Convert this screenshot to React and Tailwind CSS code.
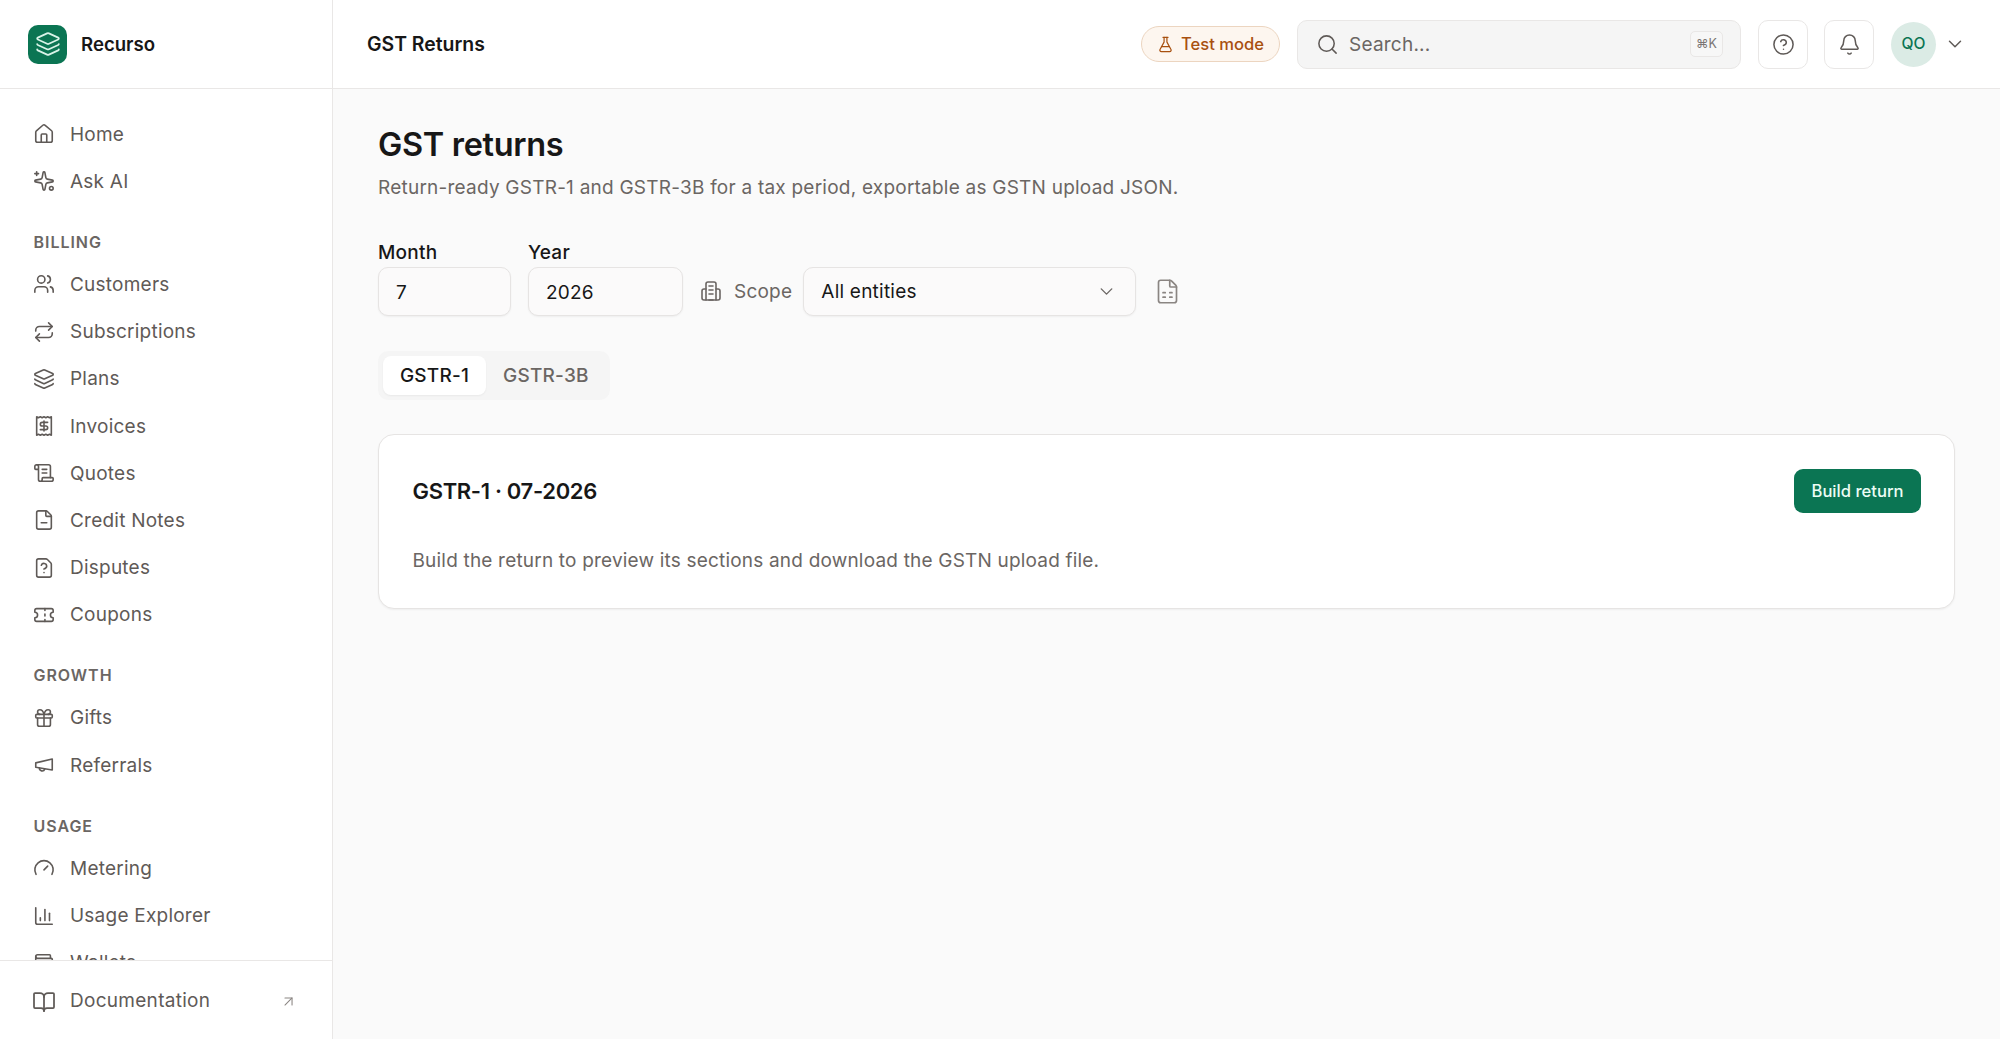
import React from 'react';
import {
  ArrowUpRight, Bell, BookOpen, ChartColumn, ChevronDown, CircleHelp, FileMinus,
  FileQuestion, FileSpreadsheet, FlaskConical, Gauge, Gift, House, Layers, Receipt,
  Repeat, ScrollText, Search, Sparkles, Ticket, Users, Wallet,
} from 'lucide-react';

// lucide's megaphone has the wrong shape here, the reference one is a flat cone
const Cone = ({ size = 24, strokeWidth = 2, className = '' }) => (
  <svg width={size} height={size} viewBox="0 0 24 24" fill="none" stroke="currentColor" strokeWidth={strokeWidth} strokeLinecap="round" strokeLinejoin="round" className={className}>
    <path d="M21 5.5v12L3 14.5v-4.8z" />
    <path d="M7 15.2a3 3 0 0 0 5.8 1.3" />
  </svg>
);

const Tower = ({ size = 24, strokeWidth = 2, className = '' }) => (
  <svg width={size} height={size} viewBox="0 0 24 24" fill="none" stroke="currentColor" strokeWidth={strokeWidth} strokeLinecap="round" strokeLinejoin="round" className={className}>
    <path d="M7 21V5a2 2 0 0 1 2-2h6a2 2 0 0 1 2 2v16" />
    <path d="M10 7h4M10 11h4M10 15h4" />
    <path d="M7 10H5a2 2 0 0 0-2 2v7a2 2 0 0 0 2 2h14a2 2 0 0 0 2-2v-7a2 2 0 0 0-2-2h-2" />
    <path d="M10 21h4" />
  </svg>
);

const navGroups = [
  { items: [['Home', House], ['Ask AI', Sparkles]] },
  {
    label: 'BILLING',
    items: [
      ['Customers', Users], ['Subscriptions', Repeat], ['Plans', Layers], ['Invoices', Receipt],
      ['Quotes', ScrollText], ['Credit Notes', FileMinus], ['Disputes', FileQuestion], ['Coupons', Ticket],
    ],
  },
  { label: 'GROWTH', items: [['Gifts', Gift], ['Referrals', Cone]] },
  { label: 'USAGE', items: [['Metering', Gauge], ['Usage Explorer', ChartColumn], ['Wallets', Wallet]] },
];

const NavItem = ({ label, icon: Icon }) => (
  <div className="flex h-[47.2px] shrink-0 items-center gap-[15px] pl-[33px] text-[#5f5a57]">
    <Icon
      size={22}
      strokeWidth={1.75}
      className={`shrink-0 ${label === 'Ask AI' ? '-scale-x-100' : ''}`}
    />
    <span className="text-[19px] leading-none tracking-[0.012em]">{label}</span>
  </div>
);

const Sidebar = () => (
  <aside className="flex h-[1039px] w-[333px] shrink-0 flex-col border-r border-[#e9e7e6] bg-white">
    <div className="flex h-[89px] shrink-0 items-center gap-[14px] border-b border-[#e9e7e6] pl-[28px]">
      <div className="flex h-[39px] w-[39px] items-center justify-center rounded-[10px] bg-[#0b7553]">
        <Layers size={26} strokeWidth={1.6} className="text-[#d9f3e8]" />
      </div>
      <span className="pt-[1.5px] text-[18.6px] font-semibold text-[#171717]">Recurso</span>
    </div>
    <nav className="flex min-h-0 flex-1 flex-col overflow-hidden pt-[21.5px]">
      {navGroups.map((group, i) => (
        <div key={i} className="flex shrink-0 flex-col">
          {group.label && (
            <div className="mt-[24.5px] mb-[6.5px] flex h-[25px] items-center pl-[33.5px] text-[16px] font-semibold tracking-[0.06em] text-[#6b6663]">
              {group.label}
            </div>
          )}
          {group.items.map(([label, Icon]) => (
            <NavItem key={label} label={label} icon={Icon} />
          ))}
        </div>
      ))}
    </nav>
    <div className="flex h-[79px] shrink-0 items-center border-t border-[#e9e7e6] pt-[3px] pr-[35px] pl-[32px] text-[#5f5a57]">
      <BookOpen size={24} strokeWidth={1.75} className="shrink-0" />
      <span className="ml-[14px] flex-1 text-[19px] tracking-[0.015em]">Documentation</span>
      <ArrowUpRight size={17} strokeWidth={1.5} className="text-[#8a8582]" />
    </div>
  </aside>
);

const Header = () => (
  <header className="flex h-[89px] shrink-0 items-center border-b border-[#e9e7e6] bg-white pr-[34px] pl-[34px]">
    <h2 className="flex-1 pt-[1.5px] text-[19.4px] font-semibold text-[#171717]">GST Returns</h2>
    <div className="flex h-[36px] w-[139px] items-center justify-center gap-[7px] rounded-full border border-[#ecd5c0] bg-[#fdf6ef] text-[16.6px] font-medium text-[#a8500f]">
      <FlaskConical size={17} strokeWidth={1.7} />
      Test mode
    </div>
    <div className="ml-[17px] flex h-[49px] w-[444px] items-center rounded-[10px] border border-[#e9e7e6] bg-[#f5f5f5] pr-[17px] pl-[18px]">
      <Search size={23} strokeWidth={1.6} className="text-[#5f5a57]" />
      <span className="ml-[10px] flex-1 pt-[1.5px] text-[19px] tracking-[0.012em] text-[#6b6663]">Search...</span>
      <kbd className="flex h-[26px] w-[33px] items-center justify-center rounded-[5px] border border-[#e9e7e6] bg-[#f7f7f7] font-[Inter,'DejaVu_Sans',sans-serif] text-[12.5px] text-[#7a7573]">
        ⌘K
      </kbd>
    </div>
    <button className="ml-[17px] flex h-[49px] w-[50px] items-center justify-center rounded-[10px] border border-[#e9e7e6] bg-white text-[#5f5a57]">
      <CircleHelp size={23} strokeWidth={1.6} />
    </button>
    <button className="ml-[16px] flex h-[49px] w-[50px] items-center justify-center rounded-[10px] border border-[#e9e7e6] bg-white text-[#5f5a57]">
      <Bell size={23} strokeWidth={1.6} />
    </button>
    <div className="ml-[17px] flex h-[45px] w-[45px] items-center justify-center rounded-full bg-[#dbebe5] text-[15.6px] font-medium text-[#0b7553]">
      QO
    </div>
    <ChevronDown size={22} strokeWidth={1.6} className="ml-[8px] text-[#5f5a57]" />
  </header>
);

const Field = ({ label, value, width }) => (
  <label className="flex flex-col">
    <span className="mb-[3px] text-[19px] leading-[22px] font-medium tracking-[0.012em] text-[#171717]">{label}</span>
    <input
      readOnly
      value={value}
      className={`h-[49px] ${width} rounded-[10px] border border-[#e6e4e3] bg-[#fbfafa] px-[17px] pt-[3px] text-[19px] tracking-[0.012em] text-[#171717] shadow-xs outline-none`}
    />
  </label>
);

export default function App() {
  return (
    <div className="flex h-[1039px] w-[2000px] overflow-hidden bg-[#fafafa] font-[Inter,sans-serif]">
      <Sidebar />
      <div className="flex min-w-0 flex-1 flex-col">
        <Header />
        <main className="flex flex-col pt-[36px] pr-[45px] pl-[45px]">
          <h1 className="text-[32.5px] leading-[40px] font-semibold tracking-[-0.01em] text-[#171717]">GST returns</h1>
          <p className="mt-[10.5px] text-[19px] leading-[24px] tracking-[0.012em] text-[#6b6663]">
            Return-ready GSTR-1 and GSTR-3B for a tax period, exportable as GSTN upload JSON.
          </p>
          <div className="mt-[42px] flex items-end">
            <Field label="Month" value="7" width="w-[133px]" />
            <div className="ml-[17px]">
              <Field label="Year" value="2026" width="w-[155px]" />
            </div>
            <div className="ml-[16px] flex h-[49px] items-center gap-[11px] text-[#6b6663]">
              <Tower size={24} strokeWidth={1.6} />
              <span className="pt-[1.5px] text-[19px] tracking-[0.012em]">Scope</span>
            </div>
            <div className="ml-[11px] flex h-[49px] w-[333px] items-center justify-between rounded-[10px] border border-[#e6e4e3] bg-[#fbfafa] pr-[18px] pl-[17px] text-[19px] tracking-[0.012em] text-[#171717] shadow-xs">
              <span className="pt-[3px]">All entities</span>
              <ChevronDown size={21} strokeWidth={1.6} className="text-[#6b6663]" />
            </div>
            <div className="ml-[18px] flex h-[49px] items-center text-[#8a8582]">
              <FileSpreadsheet size={27} strokeWidth={1.5} />
            </div>
          </div>
          <div className="mt-[35.5px] flex h-[49px] w-[232px] items-center rounded-[10px] bg-[#f5f5f5] px-[5px]">
            <div className="flex h-[39px] w-[103px] items-center justify-center rounded-[8px] bg-white pt-[1.5px] text-[19px] font-medium tracking-[0.012em] text-[#171717] shadow-xs">
              GSTR-1
            </div>
            <div className="ml-[17px] pt-[1.5px] text-[19px] font-medium tracking-[0.012em] text-[#6b6663]">GSTR-3B</div>
          </div>
          <section className="mt-[34px] flex h-[175px] flex-col rounded-[16px] border border-[#e6e4e3] bg-white pt-[34px] pr-[33px] pl-[33.5px] shadow-xs">
            <div className="flex items-center justify-between">
              <h3 className="text-[22px] font-semibold tracking-[-0.015em] text-[#171717]">GSTR-1 · 07-2026</h3>
              <button className="flex h-[44px] w-[127px] items-center justify-center rounded-[9px] bg-[#0b7553] text-[16.6px] font-medium text-[#ecfdf5]">
                Build return
              </button>
            </div>
            <p className="mt-[36px] text-[19px] leading-[24px] tracking-[0.01em] text-[#6b6663]">
              Build the return to preview its sections and download the GSTN upload file.
            </p>
          </section>
        </main>
      </div>
    </div>
  );
}
